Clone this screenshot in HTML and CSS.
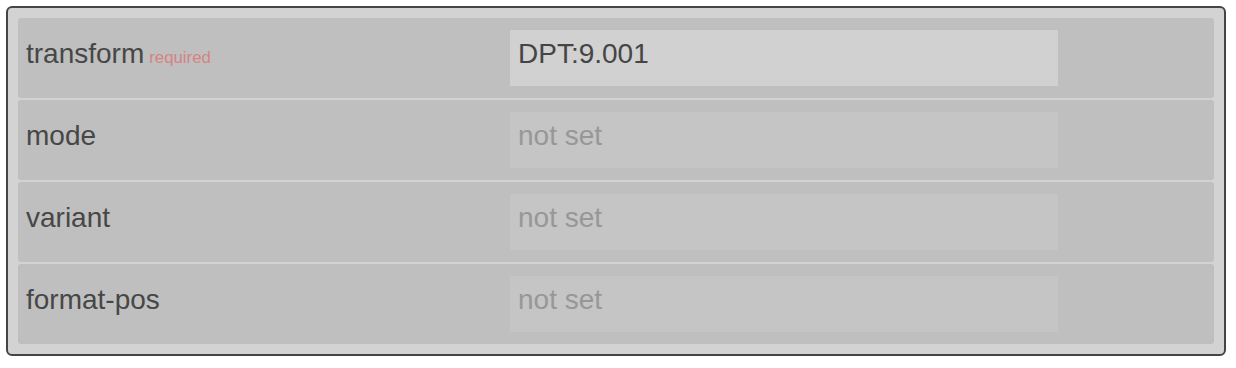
FILE: index.html
```html
<!DOCTYPE html>
<html>
<head>
<meta charset="utf-8">
<link rel="stylesheet" href="styles.css">
</head>
<body>
<div class="panel">
  <div class="row">
    <div class="label">transform<span class="req">required</span></div>
    <div class="field filled">DPT:9.001</div>
  </div>
  <div class="row">
    <div class="label">mode</div>
    <div class="field empty">not set</div>
  </div>
  <div class="row">
    <div class="label">variant</div>
    <div class="field empty">not set</div>
  </div>
  <div class="row">
    <div class="label">format-pos</div>
    <div class="field empty">not set</div>
  </div>
</div>
</body>
</html>
```
FILE: styles.css
```css
html, body {
  margin: 0;
  padding: 0;
  background: #ffffff;
}
body {
  padding: 6px;
  font-family: "Liberation Sans", Arial, sans-serif;
}
.panel {
  box-sizing: border-box;
  width: 1220px;
  height: 350px;
  border: 2px solid #454545;
  border-radius: 6px;
  background: #d3d3d3;
  padding: 10px;
  display: flex;
  flex-direction: column;
  gap: 2px;
}
.row {
  box-sizing: border-box;
  height: 80px;
  background: #bfbfbf;
  border-radius: 3px;
  padding: 12px 8px;
  display: grid;
  grid-template-columns: 484px 548px;
  font-size: 28px;
}
.label {
  color: #474747;
  padding-top: 8px;
}
.req {
  font-size: 0.6em;
  color: #d48484;
  margin-left: 5px;
}
.field {
  box-sizing: border-box;
  height: 56px;
  padding: 8px 8px;
}
.filled {
  background: #d1d1d1;
  color: #454545;
}
.empty {
  background: #c5c5c5;
  color: #979797;
}
```
